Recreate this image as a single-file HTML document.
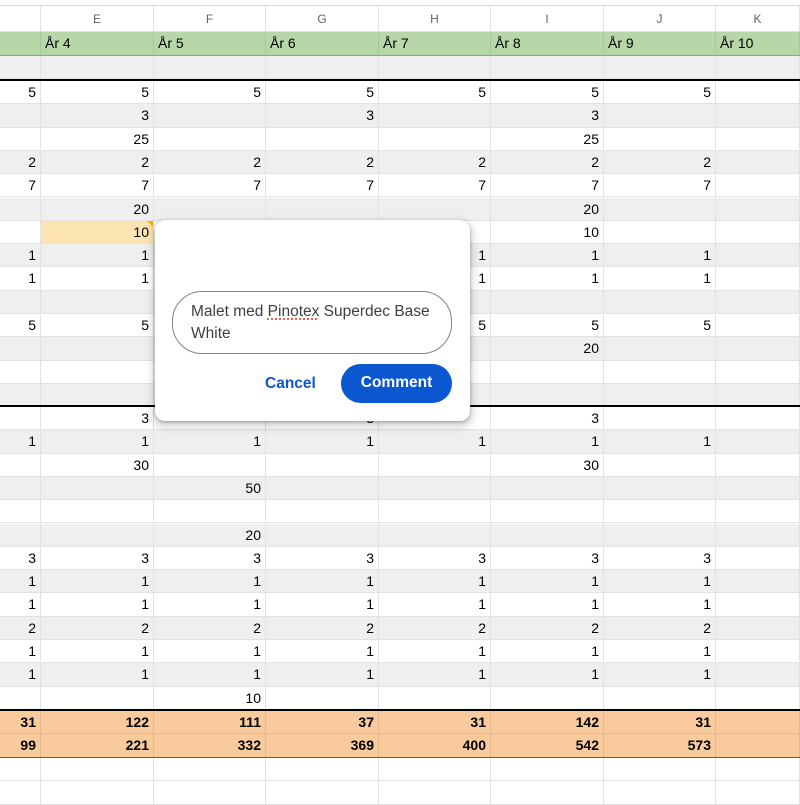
<!DOCTYPE html>
<html><head><meta charset="utf-8"><style>
*{box-sizing:border-box;margin:0;padding:0}
body{width:800px;height:801px;overflow:hidden;background:#fff;font-family:"Liberation Sans",Arial,sans-serif;position:relative}
.r{position:absolute;left:0;width:800px;height:23.3px;display:flex}
.r div{height:100%;border-right:1px solid #e2e2e2;border-bottom:1px solid #e2e2e2;text-align:right;padding-right:4px;font-size:14px;line-height:23px;color:#000;overflow:hidden}
.r div:nth-child(1){width:41px}.r div:nth-child(2){width:113px}.r div:nth-child(3){width:112px}.r div:nth-child(4){width:113px}.r div:nth-child(5){width:112px}.r div:nth-child(6){width:113px}.r div:nth-child(7){width:112px}.r div:nth-child(8){width:84px}
.g{background:#efefef}
.hd div{text-align:center;font-size:12px;color:#5f6368;line-height:27px;padding:0;border-top:1px solid #dadada}
.gr{background:#b7d7a8}.gr div{text-align:left;padding-left:4px;font-size:14px;border-color:#a6c798;border-bottom:1px solid #8aa77f}
.o{background:#f9cb9c}.o div{font-weight:bold;border-color:#e8b98c}
.line{position:absolute;left:0;width:800px;height:2px;background:#000}
</style></head><body>
<div class="r hd" style="top:5px;height:27px"><div></div><div>E</div><div>F</div><div>G</div><div>H</div><div>I</div><div>J</div><div>K</div></div>
<div class="r gr" style="top:32px;height:24px"><div></div><div>År 4</div><div>År 5</div><div>År 6</div><div>År 7</div><div>År 8</div><div>År 9</div><div>År 10</div></div>
<div class="r g" style="top:56px"><div></div><div></div><div></div><div></div><div></div><div></div><div></div><div></div></div>
<div class="line" style="top:79px"></div>

<div class="r" style="top:81px"><div>5</div><div>5</div><div>5</div><div>5</div><div>5</div><div>5</div><div>5</div><div></div></div>
<div class="r g" style="top:104.3px"><div></div><div>3</div><div></div><div>3</div><div></div><div>3</div><div></div><div></div></div>
<div class="r" style="top:127.6px"><div></div><div>25</div><div></div><div></div><div></div><div>25</div><div></div><div></div></div>
<div class="r g" style="top:150.9px"><div>2</div><div>2</div><div>2</div><div>2</div><div>2</div><div>2</div><div>2</div><div></div></div>
<div class="r" style="top:174.2px"><div>7</div><div>7</div><div>7</div><div>7</div><div>7</div><div>7</div><div>7</div><div></div></div>
<div class="r g" style="top:197.5px"><div></div><div>20</div><div></div><div></div><div></div><div>20</div><div></div><div></div></div>
<div class="r" style="top:220.8px"><div></div><div style="background:#fde5b3;position:relative">10<span style="position:absolute;right:0;top:0;border-top:6px solid #f4b400;border-left:6px solid transparent"></span></div><div></div><div></div><div></div><div>10</div><div></div><div></div></div>
<div class="r g" style="top:244.1px"><div>1</div><div>1</div><div>1</div><div>1</div><div>1</div><div>1</div><div>1</div><div></div></div>
<div class="r" style="top:267.4px"><div>1</div><div>1</div><div>1</div><div>1</div><div>1</div><div>1</div><div>1</div><div></div></div>
<div class="r g" style="top:290.7px"><div></div><div></div><div></div><div></div><div></div><div></div><div></div><div></div></div>
<div class="r" style="top:314px"><div>5</div><div>5</div><div>5</div><div>5</div><div>5</div><div>5</div><div>5</div><div></div></div>
<div class="r g" style="top:337.3px"><div></div><div></div><div></div><div></div><div></div><div>20</div><div></div><div></div></div>
<div class="r" style="top:360.6px"><div></div><div></div><div></div><div></div><div></div><div></div><div></div><div></div></div>
<div class="r g" style="top:383.9px"><div></div><div></div><div></div><div></div><div></div><div></div><div></div><div></div></div>
<div class="line" style="top:405px"></div>

<div class="r" style="top:407px"><div></div><div>3</div><div></div><div>3</div><div></div><div>3</div><div></div><div></div></div>
<div class="r g" style="top:430.3px"><div>1</div><div>1</div><div>1</div><div>1</div><div>1</div><div>1</div><div>1</div><div></div></div>
<div class="r" style="top:453.6px"><div></div><div>30</div><div></div><div></div><div></div><div>30</div><div></div><div></div></div>
<div class="r g" style="top:476.9px"><div></div><div></div><div>50</div><div></div><div></div><div></div><div></div><div></div></div>
<div class="r" style="top:500.2px"><div></div><div></div><div></div><div></div><div></div><div></div><div></div><div></div></div>
<div class="r g" style="top:523.5px"><div></div><div></div><div>20</div><div></div><div></div><div></div><div></div><div></div></div>
<div class="r" style="top:546.8px"><div>3</div><div>3</div><div>3</div><div>3</div><div>3</div><div>3</div><div>3</div><div></div></div>
<div class="r g" style="top:570.1px"><div>1</div><div>1</div><div>1</div><div>1</div><div>1</div><div>1</div><div>1</div><div></div></div>
<div class="r" style="top:593.4px"><div>1</div><div>1</div><div>1</div><div>1</div><div>1</div><div>1</div><div>1</div><div></div></div>
<div class="r g" style="top:616.7px"><div>2</div><div>2</div><div>2</div><div>2</div><div>2</div><div>2</div><div>2</div><div></div></div>
<div class="r" style="top:640px"><div>1</div><div>1</div><div>1</div><div>1</div><div>1</div><div>1</div><div>1</div><div></div></div>
<div class="r g" style="top:663.3px"><div>1</div><div>1</div><div>1</div><div>1</div><div>1</div><div>1</div><div>1</div><div></div></div>
<div class="r" style="top:686.6px"><div></div><div></div><div>10</div><div></div><div></div><div></div><div></div><div></div></div>
<div class="line" style="top:709px"></div>

<div class="r o" style="top:711px"><div>31</div><div>122</div><div>111</div><div>37</div><div>31</div><div>142</div><div>31</div><div></div></div>
<div class="r o" style="top:734.3px"><div>99</div><div>221</div><div>332</div><div>369</div><div>400</div><div>542</div><div>573</div><div></div></div>
<div class="line" style="top:757px;height:1px;background:#6b5a48"></div>
<div class="r" style="top:758px"><div></div><div></div><div></div><div></div><div></div><div></div><div></div><div></div></div>
<div class="r" style="top:781.3px"><div></div><div></div><div></div><div></div><div></div><div></div><div></div><div></div></div>

<div style="position:absolute;left:155px;top:220px;width:315px;height:201px;background:#fff;border-radius:10px;box-shadow:0 1px 3px rgba(0,0,0,.3),0 4px 8px 3px rgba(0,0,0,.15)">
  <div style="position:absolute;left:17px;top:71px;width:280px;height:63px;border:1px solid #80868b;border-radius:30px;padding:9px 0 0 18px;font-size:15.5px;line-height:22px;color:#3c4043">Malet med <span style="text-decoration:underline dotted #d93025;text-underline-offset:3px">Pinotex</span> Superdec Base<br>White</div>
  <div style="position:absolute;left:110px;top:155px;font-size:15.5px;font-weight:bold;color:#0b57d0">Cancel</div>
  <div style="position:absolute;left:186px;top:144px;width:111px;height:39px;border-radius:20px;background:#0b57d0;color:#fff;font-size:15.5px;font-weight:bold;text-align:center;line-height:38px">Comment</div>
</div>
</body></html>
